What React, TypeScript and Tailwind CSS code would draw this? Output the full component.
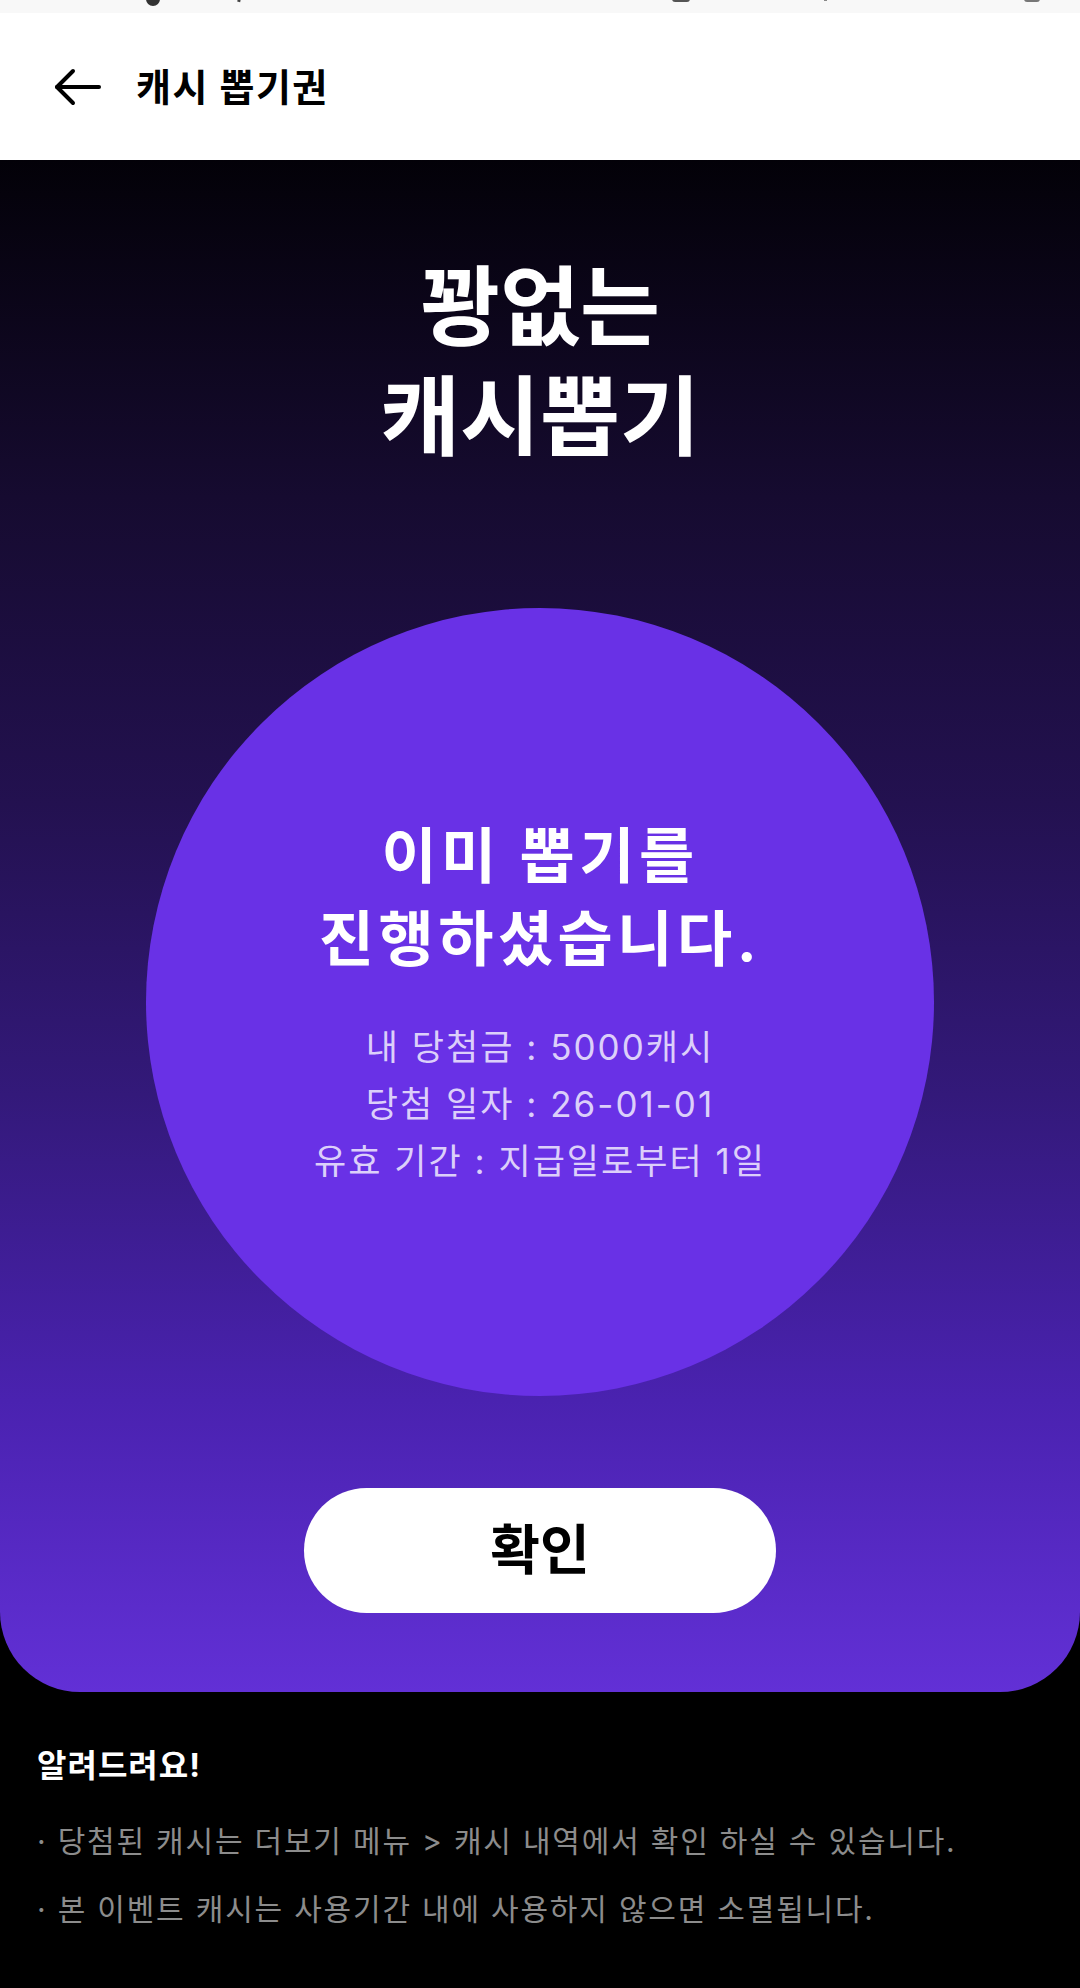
const font = { fontFamily: 'Inter, "Noto Sans CJK KR", "Noto Sans", sans-serif' }

function StatusBar() {
  return (
    <div className="relative h-[13px] overflow-hidden bg-[#f8f8f8]">
      <div className="absolute left-[146px] top-[-8px] h-[14px] w-[14px] rounded-full bg-[#333]" />
      <div className="absolute left-[238px] top-[-6px] h-[8px] w-[3px] rotate-12 bg-[#444]" />
      <div className="absolute left-[672px] top-[-4px] h-[6px] w-[18px] rounded-sm bg-[#555]" />
      <div className="absolute left-[824px] top-[-4px] h-[5px] w-[3px] bg-[#888]" />
      <div className="absolute left-[1024px] top-[-4px] h-[6px] w-[16px] rounded-sm bg-[#777]" />
    </div>
  )
}

function BackArrow() {
  return (
    <svg width="48" height="38" viewBox="0 0 48 38" fill="none" stroke="black" strokeWidth="4" strokeLinecap="round" strokeLinejoin="round">
      <path d="M46 19H4" />
      <path d="M20 3 4 19l16 16" />
    </svg>
  )
}

function Header() {
  return (
    <div className="flex h-[147px] items-center bg-white pl-[53px]">
      <BackArrow />
      <h1 className="ml-[35px] text-[38px] font-bold leading-none tracking-[1.5px] text-black">캐시 뽑기권</h1>
    </div>
  )
}

function Notice() {
  return (
    <div className="bg-black pl-[37px] pt-[54px] pb-[40px]">
      <h2 className="text-[32px] font-bold leading-[40px] tracking-[1px] text-white">알려드려요!</h2>
      <ul className="mt-[21px] text-[30px] leading-[68px] tracking-[1.8px] text-[#8c8c8c]">
        <li>· 당첨된 캐시는 더보기 메뉴 &gt; 캐시 내역에서 확인 하실 수 있습니다.</li>
        <li>· 본 이벤트 캐시는 사용기간 내에 사용하지 않으면 소멸됩니다.</li>
      </ul>
    </div>
  )
}

export default function App() {
  return (
    <div className="min-h-[1988px] w-[1080px] bg-black" style={font}>
      <StatusBar />
      <Header />

      <section className="flex flex-col items-center rounded-b-[80px] bg-[linear-gradient(180deg,#030108_0%,#160b30_22%,#231150_42%,#33197a_61%,#4a22b0_81%,#6230d6_100%)] pt-[93px] pb-[79px]">
        <h2 className="text-center text-[87px] font-bold leading-[110px] text-white">
          꽝없는
          <br />
          캐시뽑기
        </h2>

        <div className="mt-[135px] flex h-[788px] w-[788px] flex-col items-center justify-center rounded-full bg-[#6931e6] text-center">
          <p className="text-[60px] font-bold leading-[83px] tracking-[4.5px] text-white">
            이미 뽑기를
            <br />
            진행하셨습니다.
          </p>
          <div className="mt-[38px] text-[35px] leading-[57px] tracking-[2px] text-[#dccffa]">
            <p>내 당첨금 : 5000캐시</p>
            <p>당첨 일자 : 26-01-01</p>
            <p>유효 기간 : 지급일로부터 1일</p>
          </div>
        </div>

        <button className="mt-[92px] flex h-[125px] w-[472px] items-center justify-center rounded-full bg-white text-[54px] font-bold text-black">
          확인
        </button>
      </section>

      <Notice />
    </div>
  )
}
